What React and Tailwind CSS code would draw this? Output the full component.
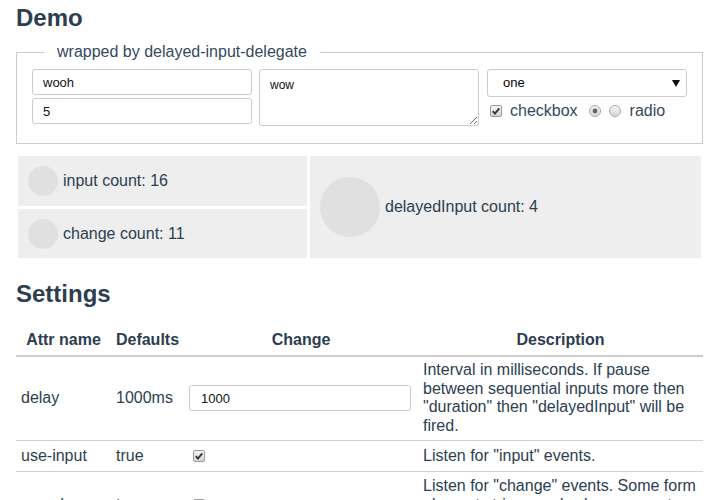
import React from 'react';

// kotak centang & radio gaya lama (abu-abu), digambar manual
const Check = ({ checked = true }) => (
  <svg width="12" height="12" viewBox="0 0 12 12" className="shrink-0 block">
    <defs>
      <linearGradient id="cbg" x1="0" y1="0" x2="0" y2="1">
        <stop offset="0" stopColor="#f6f6f6" />
        <stop offset="1" stopColor="#d2d2d2" />
      </linearGradient>
    </defs>
    <rect x="0.5" y="0.5" width="11" height="11" rx="1.5" fill="url(#cbg)" stroke="#9c9c9c" />
    {checked && <path d="M2.8 6.1 L4.9 8.5 L9.3 3.3" fill="none" stroke="#333" strokeWidth="1.8" />}
  </svg>
);

const Radio = ({ checked }) => (
  <svg width="12" height="12" viewBox="0 0 12 12" className="shrink-0 block">
    <defs>
      <linearGradient id="rbg" x1="0" y1="0" x2="0" y2="1">
        <stop offset="0" stopColor="#f6f6f6" />
        <stop offset="1" stopColor="#d6d6d6" />
      </linearGradient>
    </defs>
    <circle cx="6" cy="6" r="5.5" fill="url(#rbg)" stroke="#a9a9a9" />
    {checked && <circle cx="6" cy="6" r="2.4" fill="#666" />}
  </svg>
);

const Counter = ({ circle, label, className }) => (
  <div className={`bg-[#eeeeee] flex items-center pl-[10px] ${className}`}>
    <span className={`rounded-full bg-[#e0e0e0] shrink-0 ${circle}`} />
    <span className="ml-[5px] text-[16px] leading-[18px]">{label}</span>
  </div>
);

const rows = [
  {
    name: 'delay',
    def: '1000ms',
    change: 'input',
    desc: ['Interval in milliseconds. If pause', 'between sequential inputs more then', '"duration" then "delayedInput" will be', 'fired.'],
    cell: 'py-[4.5px]',
  },
  { name: 'use-input', def: 'true', change: 'check', desc: ['Listen for "input" events.'], cell: 'py-[6px]' },
  {
    name: 'use-change',
    def: 'true',
    change: 'check',
    desc: ['Listen for "change" events. Some form', 'elements trigger only change events, so', 'it is on by default.'],
    cell: 'py-[5px]',
  },
];

export default function App() {
  return (
    <div className="h-[500px] overflow-hidden bg-white pl-[16px] pr-[17px] text-[#2c3e50] font-['Liberation_Sans',Arial,sans-serif]">
      {/* DEMO */}
      <h1 className="mt-[4px] h-[28px] text-[24px] leading-[28px] font-bold">Demo</h1>

      <fieldset className="mt-[11px] mr-[1px] border border-[#cccccc] px-[15px] pt-[8px] pb-[17px]">
        <legend className="ml-[12px] px-[13px] text-[16px] leading-[18px] text-[#34495e]">wrapped by delayed-input-delegate</legend>
        <div className="flex items-start">
          <div className="w-[220px] flex flex-col gap-[3px]">
            <input readOnly value="wooh" className="h-[26px] border border-[#cccccc] rounded-[3px] pl-[10px] text-[13px] text-[#111] outline-none" />
            <input readOnly value="5" className="h-[26px] border border-[#cccccc] rounded-[3px] pl-[10px] text-[13px] text-[#111] outline-none" />
          </div>
          <textarea readOnly value="wow" className="ml-[7px] w-[220px] h-[57px] border border-[#cccccc] rounded-[3px] px-[10px] pt-[6px] text-[12px] text-[#111] outline-none" />
          <div className="ml-[8px] w-[200px] flex flex-col">
            <div className="h-[28px] border border-[#cccccc] rounded-[3px] flex items-center justify-between pl-[15px] pr-[6px] text-[13px] text-black">
              <span>one</span>
              <svg width="8" height="7" viewBox="0 0 8 7"><path d="M0 0 H8 L4 7 Z" fill="#111" /></svg>
            </div>
            <div className="mt-[4px] flex items-center h-[20px] text-[16px] text-[#34495e]">
              <span className="ml-[3px]"><Check /></span>
              <span className="ml-[8px]">checkbox</span>
              <span className="ml-[11px]"><Radio checked /></span>
              <span className="ml-[8px]"><Radio /></span>
              <span className="ml-[9px]">radio</span>
            </div>
          </div>
        </div>
      </fieldset>

      {/* COUNTERS */}
      <div className="mt-[12px] mx-[2px] flex h-[102px]">
        <div className="w-[289px] flex flex-col gap-[3px]">
          <Counter circle="w-[30px] h-[30px]" label="input count: 16" className="h-[50px]" />
          <Counter circle="w-[30px] h-[30px]" label="change count: 11" className="h-[49px]" />
        </div>
        <Counter circle="w-[60px] h-[60px]" label="delayedInput count: 4" className="ml-[3px] flex-1" />
      </div>

      {/* SETTINGS */}
      <h2 className="mt-[22px] h-[28px] text-[24px] leading-[28px] font-bold">Settings</h2>

      <table className="mt-[18px] w-[687px] table-fixed border-collapse text-[16px] leading-[18.5px]">
        <colgroup>
          <col className="w-[95px]" />
          <col className="w-[73px]" />
          <col className="w-[234px]" />
          <col className="w-[285px]" />
        </colgroup>
        <thead>
          <tr className="border-b-2 border-[#cccccc]">
            <th className="py-[5px] text-center font-bold">Attr name</th>
            <th className="py-[5px] text-center font-bold">Defaults</th>
            <th className="py-[5px] text-center font-bold">Change</th>
            <th className="py-[5px] text-center font-bold">Description</th>
          </tr>
        </thead>
        <tbody>
          {rows.map((r) => (
            <tr key={r.name} className="border-b border-[#d0d0d0]">
              <td className={`px-[5px] align-middle ${r.cell}`}>{r.name}</td>
              <td className={`px-[5px] align-middle ${r.cell}`}>{r.def}</td>
              <td className={`px-[5px] align-middle ${r.cell}`}>
                {r.change === 'input' ? (
                  <input readOnly value="1000" className="block w-[222px] h-[26px] border border-[#cccccc] rounded-[3px] pl-[11px] text-[13px] text-[#111] outline-none" />
                ) : (
                  <span className="block ml-[4px]"><Check /></span>
                )}
              </td>
              <td className={`px-[5px] align-middle whitespace-nowrap ${r.cell}`}>
                {r.desc.map((line) => (
                  <div key={line}>{line}</div>
                ))}
              </td>
            </tr>
          ))}
        </tbody>
      </table>
    </div>
  );
}
